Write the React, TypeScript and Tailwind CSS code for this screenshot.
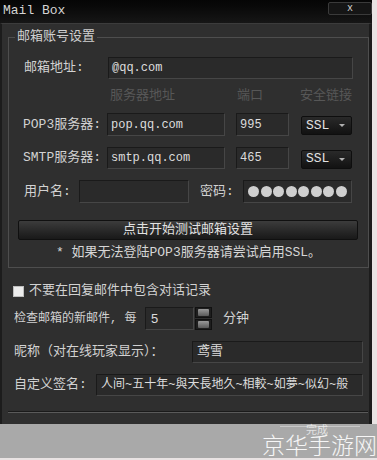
import type { FC, PropsWithChildren } from "react";

const font = "font-['Liberation_Mono','Noto_Sans_CJK_SC',monospace]";

const Box: FC<PropsWithChildren<{ className?: string }>> = ({ children, className = "" }) => (
  <div
    className={`flex items-center overflow-hidden whitespace-nowrap border border-t-[#1a1a1a] border-l-[#1a1a1a] border-b-[#464646] border-r-[#464646] bg-[#2a2a2a] px-[3px] text-[#dcdcdc] ${className}`}
  >
    {children}
  </div>
);

const Select: FC = () => (
  <div className="mt-[2px] ml-[12px] flex h-[19px] w-[51px] items-center justify-between rounded-[2px] border border-[#0e0e0e] bg-linear-to-b from-[#2a2a2a] to-[#121212] pl-[4px] pr-[6px] text-[13px] text-[#e2e2e2]">
    <span>SSL</span>
    <span className="h-0 w-0 border-x-[3px] border-t-[3px] border-x-transparent border-t-[#b0b0b0]" />
  </div>
);

const Label: FC<PropsWithChildren<{ className?: string }>> = ({ children, className = "" }) => (
  <span className={`shrink-0 whitespace-nowrap leading-[16px] text-[#d2d2d2] ${className}`}>{children}</span>
);

const SpinButton: FC = () => (
  <div className="flex h-[11px] w-[17px] items-center justify-center border border-[#111] bg-[#1e1e1e]">
    <div className="h-[7px] w-[11px] rounded-[1px] bg-linear-to-b from-[#9a9a9a] to-[#5a5a5a]" />
  </div>
);

export default function App() {
  return (
    <div className={`relative h-[460px] w-[377px] overflow-hidden bg-[#e9e3e3] text-[13px] ${font}`}>
      <div className="flex h-[458px] w-[372px] flex-col bg-[#2f2f2f]">
        {/* title bar */}
        <div className="flex h-[23px] shrink-0 items-start bg-linear-to-b from-[#050505] to-[#161616]">
          <span className="pl-[3px] pt-[3px] leading-[16px] text-[#d4d4d4]">Mail Box</span>
          <div className="ml-auto mt-[2px] flex h-[13px] w-[44px] items-center justify-center rounded-[2px] border border-[#3a3a3a] bg-[#151515] text-[10px] leading-none text-[#cfcfcf]">
            x
          </div>
        </div>

        <div className="flex flex-1 flex-col border-l-2 border-r-[3px] border-[#1c1c1c] border-t border-t-[#3c3c3c]">
          {/* account group */}
          <fieldset className="mt-[5px] ml-[6px] flex w-[361px] flex-col border border-[#4e4e4e] pb-[6px]">
            <legend className="ml-[6px] h-[16px] px-[2px] leading-[16px] text-[#cfcfcf]">
              邮箱账号设置
            </legend>

            <div className="mt-[12px] flex h-[22px] items-center">
              <Label className="ml-[15px] w-[84px]">邮箱地址:</Label>
              <Box className="h-[22px] w-[245px] text-[12px]">@qq.com</Box>
            </div>

            <div className="mt-[9px] flex h-[16px] items-center leading-[16px] text-[#575757]">
              <span className="ml-[101px] w-[127px]">服务器地址</span>
              <span className="w-[63px]">端口</span>
              <span>安全链接</span>
            </div>

            <div className="mt-[9px] flex h-[23px] items-center">
              <Label className="ml-[14px] w-[84px]">POP3服务器:</Label>
              <Box className="h-[23px] w-[118px] text-[12px]">pop.qq.com</Box>
              <Box className="ml-[11px] h-[23px] w-[53px] text-[12px]">995</Box>
              <Select />
            </div>

            <div className="mt-[11px] flex h-[22px] items-center">
              <Label className="ml-[14px] w-[84px]">SMTP服务器:</Label>
              <Box className="h-[22px] w-[118px] text-[12px]">smtp.qq.com</Box>
              <Box className="ml-[11px] h-[22px] w-[53px] text-[12px]">465</Box>
              <Select />
            </div>

            <div className="mt-[11px] flex h-[23px] items-center">
              <Label className="ml-[15px] w-[55px]">用户名:</Label>
              <Box className="h-[23px] w-[110px]" />
              <Label className="ml-[11px] w-[43px]">密码:</Label>
              <Box className="h-[23px] w-[109px] gap-[1.5px] pl-[4px]">
                {Array.from({ length: 8 }).map((_, i) => (
                  <span key={i} className="h-[11px] w-[11px] shrink-0 rounded-full bg-[#cfcfcf]" />
                ))}
              </Box>
            </div>

            <button
              type="button"
              className="mt-[17px] ml-[9px] flex h-[20px] w-[340px] items-center justify-center rounded-[2px] border border-[#101010] bg-linear-to-b from-[#3c3c3c] to-[#191919] leading-[16px] text-[#e2e2e2]"
            >
              点击开始测试邮箱设置
            </button>

            <div className="mt-[5px] h-[16px] text-center leading-[16px] text-[#d6d6d6]">
              * 如果无法登陆POP3服务器请尝试启用SSL。
            </div>
          </fieldset>

          {/* options */}
          <div className="mt-[17px] flex h-[12px] items-center">
            <span className="ml-[11px] h-[11px] w-[11px] shrink-0 border border-[#bdbdbd] bg-[#ececec]" />
            <Label className="ml-[5px]">不要在回复邮件中包含对话记录</Label>
          </div>

          <div className="mt-[10px] flex h-[23px] items-center">
            <Label className="ml-[12px] w-[131px] text-[12px]">检查邮箱的新邮件, 每</Label>
            <Box className="h-[23px] w-[49px] pl-[5px] font-['Liberation_Sans',sans-serif]">5</Box>
            <div className="ml-[1px] flex flex-col gap-[1px]">
              <SpinButton />
              <SpinButton />
            </div>
            <Label className="ml-[11px]">分钟</Label>
          </div>

          <div className="mt-[11px] flex h-[22px] items-center">
            <Label className="ml-[12px] w-[178px]">昵称（对在线玩家显示）：</Label>
            <Box className="h-[22px] w-[171px] pl-[4px]">鸢雪</Box>
          </div>

          <div className="mt-[11px] flex h-[22px] items-center">
            <Label className="ml-[12px] w-[82px]">自定义签名:</Label>
            <Box className="h-[22px] w-[267px] pl-[4px] text-[12px]">人间~五十年~與天長地久~相較~如夢~似幻~般</Box>
          </div>

          <div className="mt-[15px] ml-[6px] h-[2px] w-[360px] border-t border-b border-t-[#1a1a1a] border-b-[#5a5a5a]" />
        </div>
      </div>

      {/* watermark band */}
      <div className="absolute left-0 top-[424px] h-[34px] w-[377px] bg-[#a9a9a9]">
        <div className="absolute left-[280px] top-[2px] h-0 w-[80px] border-t border-[#c8c8c8]" />
        <span className="absolute left-[306px] top-[1px] text-[11px] leading-[12px] text-[#f2f2f2]/80">完成</span>
        <span className="absolute left-[262px] top-[7px] whitespace-nowrap font-['Noto_Sans_CJK_SC',sans-serif] text-[23px] font-light leading-[26px] text-white/90">
          京华手游网
        </span>
      </div>
    </div>
  );
}
